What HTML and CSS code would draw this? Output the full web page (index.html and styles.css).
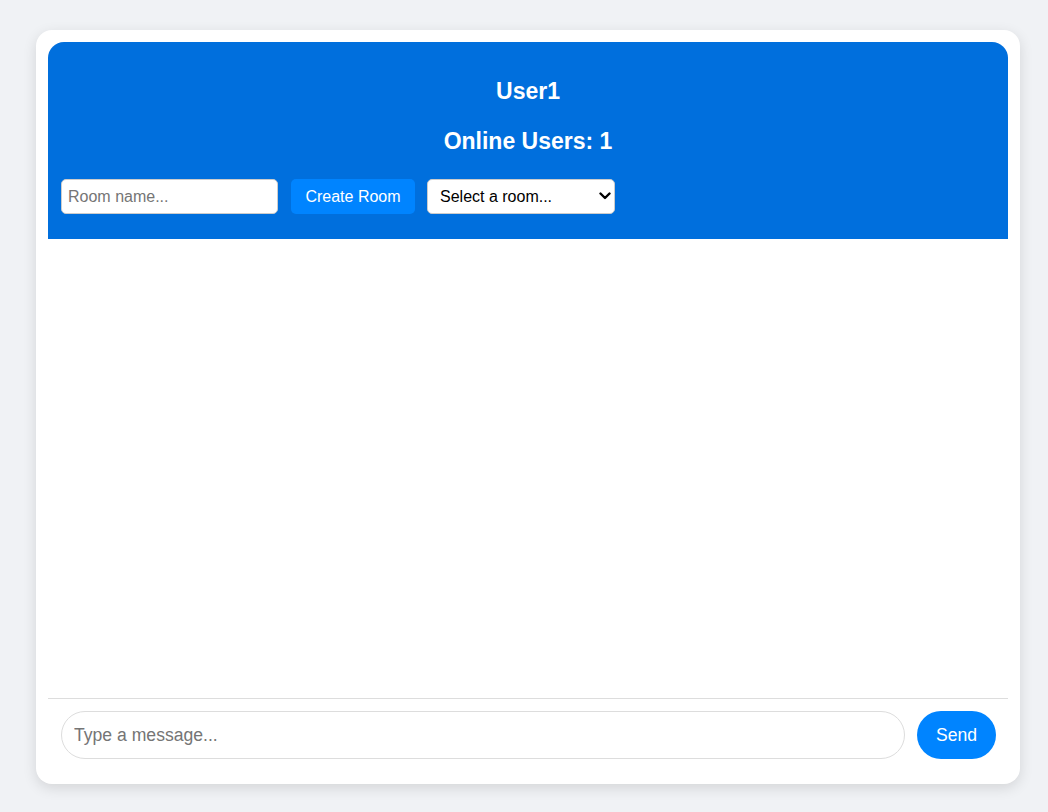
FILE: index.html
```html
<!DOCTYPE html>
<html>
<head>
<meta charset="utf-8">
<link rel="stylesheet" href="styles.css">
</head>
<body>
<div class="chat">
  <div class="header">
    <div class="title">User1</div>
    <div class="online">Online Users: 1</div>
    <div class="controls">
      <input class="room-input" type="text" placeholder="Room name...">
      <button class="create-btn">Create Room</button>
      <div class="select-wrap">
        <select class="room-select"><option>Select a room...</option></select>
        <svg class="chev" width="12" height="8" viewBox="0 0 12 8"><path d="M1.5 1.5 L6 6 L10.5 1.5" fill="none" stroke="#000" stroke-width="2.4" stroke-linecap="round" stroke-linejoin="round"/></svg>
      </div>
    </div>
  </div>
  <div class="messages"></div>
  <div class="composer">
    <input class="msg-input" type="text" placeholder="Type a message...">
    <button class="send-btn">Send</button>
  </div>
</div>
</body>
</html>
```
FILE: styles.css
```css
html, body { margin: 0; }
body {
  background: #f0f2f5;
  font-family: "Liberation Sans", Arial, sans-serif;
  padding: 30px 28px 28px 36px;
  height: 812px;
  box-sizing: border-box;
}
.chat {
  width: 984px;
  height: 754px;
  box-sizing: border-box;
  background: #fff;
  border-radius: 16px;
  padding: 12px;
  box-shadow: 0 4px 14px rgba(0,0,0,0.12);
  display: flex;
  flex-direction: column;
}
.header {
  background: #006fdd;
  color: #fff;
  border-radius: 16px 16px 0 0;
  padding: 36px 13px 25px;
  text-align: center;
}
.title, .online {
  font-weight: bold;
  font-size: 23px;
  line-height: 26px;
}
.online { margin-top: 24px; }
.controls {
  margin-top: 25px;
  display: flex;
  align-items: center;
  height: 35px;
}
.room-input {
  width: 217px;
  height: 35px;
  box-sizing: border-box;
  border: 1px solid #ccc;
  border-radius: 5px;
  padding: 0 6px;
  font-family: inherit;
  font-size: 16px;
  outline: none;
}
.room-input::placeholder { color: #757575; }
.create-btn {
  margin-left: 13px;
  height: 35px;
  width: 124px;
  border: none;
  border-radius: 5px;
  background: #0084ff;
  color: #fff;
  font-family: inherit;
  font-size: 16px;
  padding: 0;
}
.select-wrap {
  position: relative;
  margin-left: 12px;
  width: 188px;
  height: 35px;
}
.room-select {
  appearance: none;
  -webkit-appearance: none;
  width: 188px;
  height: 35px;
  border: 1px solid #ccc;
  border-radius: 5px;
  background: #fff;
  color: #000;
  font-family: inherit;
  font-size: 16px;
  padding: 0 24px 0 12px;
  text-align: left;
}
.chev {
  position: absolute;
  right: 4px;
  top: 13px;
  pointer-events: none;
}
.messages {
  flex: 1;
}
.composer {
  border-top: 1px solid #ddd;
  padding: 12px 12px 13px 13px;
  display: flex;
  align-items: center;
}
.msg-input {
  flex: 1;
  height: 48px;
  box-sizing: border-box;
  border: 1px solid #ddd;
  border-radius: 24px;
  padding: 0 12px;
  font-family: inherit;
  font-size: 17.6px;
  outline: none;
}
.msg-input::placeholder { color: #757575; }
.send-btn {
  margin-left: 12px;
  width: 79px;
  height: 48px;
  border: none;
  border-radius: 24px;
  background: #0084ff;
  color: #fff;
  font-family: inherit;
  font-size: 17.6px;
  padding: 0;
}
```
